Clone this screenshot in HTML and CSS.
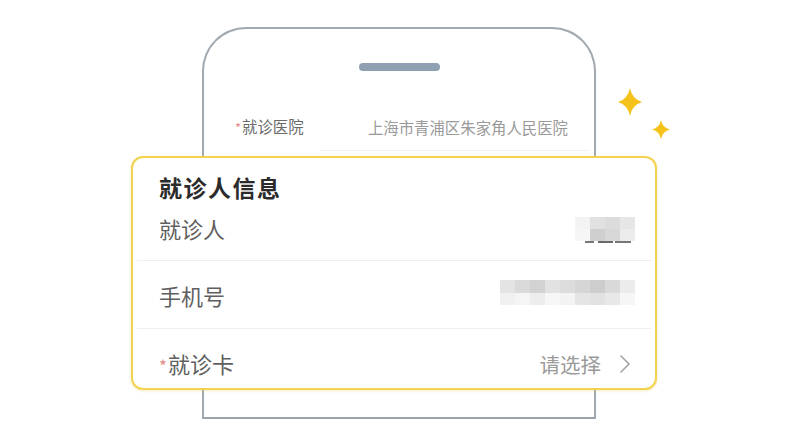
FILE: index.html
```html
<!DOCTYPE html>
<html lang="zh">
<head>
<meta charset="utf-8">
<link rel="stylesheet" href="styles.css">
</head>
<body>
<div class="stage">
  <div class="phone">
    <div class="notch"></div>
    <div class="hosp-row">
      <span class="hosp-label"><span class="req">*</span>就诊医院</span>
      <span class="hosp-value">上海市青浦区朱家角人民医院</span>
    </div>
    <div class="hosp-line"></div>
  </div>

  <svg class="stars" width="70" height="60" viewBox="0 0 70 60">
    <path d="M24 3 Q26 14 36 17 Q26 20 24 31 Q22 20 12 17 Q22 14 24 3 Z" fill="#f5c21b"/>
    <path d="M55 35 Q56.6 43 64 44.5 Q56.6 46 55 54 Q53.4 46 46 44.5 Q53.4 43 55 35 Z" fill="#f5c21b"/>
  </svg>

  <div class="card">
    <div class="card-title">就诊人信息</div>
    <div class="row row-first">
      <span class="label">就诊人</span>
      <span class="mosaic mosaic-name">
        <i class="c1"></i><i class="c2"></i><i class="c3"></i><i class="c4"></i>
        <i class="c5"></i><i class="c6"></i><i class="c7"></i><i class="c8"></i>
        <b class="peek"></b>
      </span>
    </div>
    <div class="divider"></div>
    <div class="row row-mid">
      <span class="label">手机号</span>
      <span class="mosaic mosaic-phone">
        <i class="p1"></i><i class="p2"></i><i class="p3"></i><i class="p4"></i><i class="p5"></i><i class="p6"></i><i class="p7"></i><i class="p8"></i><i class="p9"></i>
        <i class="q1"></i><i class="q2"></i><i class="q3"></i><i class="q4"></i><i class="q5"></i><i class="q6"></i><i class="q7"></i><i class="q8"></i><i class="q9"></i>
      </span>
    </div>
    <div class="divider"></div>
    <div class="row row-last">
      <span class="label"><span class="req">*</span>就诊卡</span>
      <span class="select">请选择
        <svg class="chev" width="12" height="20" viewBox="0 0 12 20"><path d="M2 2 L10 10 L2 18" fill="none" stroke="#a3a3a3" stroke-width="1.6" stroke-linecap="round" stroke-linejoin="round"/></svg>
      </span>
    </div>
  </div>
</div>
</body>
</html>
```

FILE: styles.css
```css
* { box-sizing: border-box; }
html, body { margin: 0; padding: 0; background: #ffffff; }
body {
  width: 800px;
  height: 429px;
  overflow: hidden;
  font-family: "Noto Sans CJK SC", "Noto Sans", sans-serif;
}
.stage {
  position: relative;
  width: 800px;
  height: 429px;
  padding-top: 27px;
  padding-left: 202px;
}
.phone {
  width: 394px;
  height: 392px;
  border: 2px solid #a2a9b0;
  border-bottom-color: #9aa2aa;
  border-radius: 44px 44px 0 0;
  display: flex;
  flex-direction: column;
  align-items: center;
  padding-top: 34px;
}
.notch {
  width: 81px;
  height: 8px;
  border-radius: 4px;
  background: #8fa0b3;
}
.hosp-row {
  margin-top: 44px;
  width: 100%;
  display: flex;
  justify-content: space-between;
  align-items: center;
  padding: 0 26px 0 31px;
  font-size: 15.4px;
  line-height: 22px;
}
.hosp-label { color: #6a6a6a; }
.hosp-label .req { color: #e88a8a; font-size: 13px; margin-right: 1px; }
.hosp-value { color: #9a9a9a; }
.hosp-line {
  margin-top: 11px;
  margin-left: 110px;
  width: 270px;
  height: 1px;
  background: #f0f0f0;
}
.stars {
  position: absolute;
  left: 606px;
  top: 85px;
}
.card {
  position: absolute;
  left: 131px;
  top: 156px;
  width: 526px;
  height: 234px;
  background: #ffffff;
  border: 2px solid #f2d24e;
  border-radius: 12px;
  box-shadow: 0 1px 3px rgba(230, 200, 80, 0.35);
  padding-top: 14px;
}
.card-title {
  padding-left: 26px;
  font-size: 23px;
  font-weight: 700;
  line-height: 30px;
  letter-spacing: 1.5px;
  color: #2b2b2b;
}
.row {
  display: flex;
  justify-content: space-between;
  align-items: center;
  padding: 0 22px 0 26px;
}
.row-first { height: 58px; padding-top: 11px; padding-bottom: 17px; }
.row-mid { height: 67px; }
.row-last { height: 59px; padding-top: 20px; padding-bottom: 9px; }
.label {
  font-size: 22px;
  line-height: 30px;
  color: #5f5f5f;
}
.label .req { color: #e58b8b; font-size: 17px; margin-right: 1px; }
.divider {
  height: 1px;
  margin: 0 4px;
  background: #efefef;
}
.select {
  display: flex;
  align-items: center;
  gap: 18px;
  font-size: 20.5px;
  line-height: 30px;
  color: #9a9a9a;
}
.chev { margin-right: 2px; }
.mosaic {
  display: grid;
  position: relative;
}
.mosaic i { display: block; }
.mosaic-name {
  grid-template-columns: repeat(4, 15px);
  grid-template-rows: 12px 12px;
  margin-right: -2px;
  margin-top: 2px;
}
.mosaic-name .c1 { background: #f3f3f3; }
.mosaic-name .c2 { background: #e1e1e1; }
.mosaic-name .c3 { background: #dcdcdc; }
.mosaic-name .c4 { background: #e6e6e6; }
.mosaic-name .c5 { background: #f6f6f6; }
.mosaic-name .c6 { background: #cfcfcf; }
.mosaic-name .c7 { background: #d8d8d8; }
.mosaic-name .c8 { background: #ececec; }
.mosaic-name .peek {
  position: absolute;
  left: 10px;
  top: 24px;
  width: 46px;
  height: 2px;
  background: linear-gradient(90deg, #555 0 20%, transparent 20% 28%, #444 28% 60%, transparent 60% 66%, #555 66% 100%);
  opacity: 0.8;
}
.mosaic-phone {
  grid-template-columns: repeat(9, 15px);
  grid-template-rows: 13px 12px;
  margin-right: -2px;
  margin-top: -4px;
}
.mosaic-phone .p1 { background: #e4e4e4; }
.mosaic-phone .p2 { background: #dadada; }
.mosaic-phone .p3 { background: #d2d2d2; }
.mosaic-phone .p4 { background: #e2e2e2; }
.mosaic-phone .p5 { background: #dcdcdc; }
.mosaic-phone .p6 { background: #d6d6d6; }
.mosaic-phone .p7 { background: #cdcdcd; }
.mosaic-phone .p8 { background: #d9d9d9; }
.mosaic-phone .p9 { background: #ececec; }
.mosaic-phone .q1 { background: #f0f0f0; }
.mosaic-phone .q2 { background: #f5f5f5; }
.mosaic-phone .q3 { background: #ededed; }
.mosaic-phone .q4 { background: #f7f7f7; }
.mosaic-phone .q5 { background: #f3f3f3; }
.mosaic-phone .q6 { background: #e5e5e5; }
.mosaic-phone .q7 { background: #e2e2e2; }
.mosaic-phone .q8 { background: #e8e8e8; }
.mosaic-phone .q9 { background: #f6f6f6; }
```
